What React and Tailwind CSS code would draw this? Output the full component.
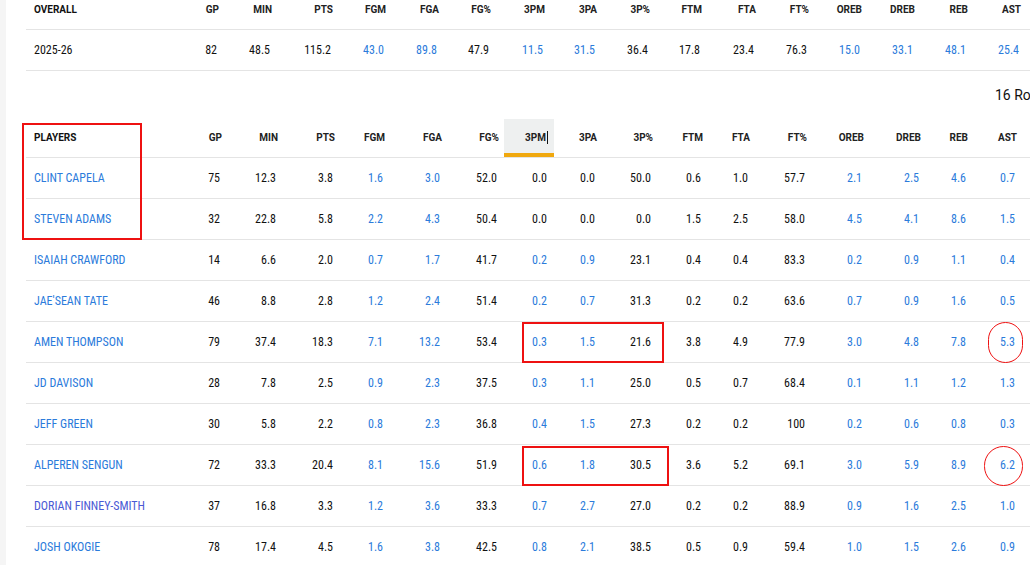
const overallCols = ["GP", "MIN", "PTS", "FGM", "FGA", "FG%", "3PM", "3PA", "3P%", "FTM", "FTA", "FT%", "OREB", "DREB", "REB", "AST"];
const blueCols = [3, 4, 6, 7, 12, 13, 14, 15];

const overall = ["82", "48.5", "115.2", "43.0", "89.8", "47.9", "11.5", "31.5", "36.4", "17.8", "23.4", "76.3", "15.0", "33.1", "48.1", "25.4"];

const players = [
  ["CLINT CAPELA", "75", "12.3", "3.8", "1.6", "3.0", "52.0", "0.0", "0.0", "50.0", "0.6", "1.0", "57.7", "2.1", "2.5", "4.6", "0.7"],
  ["STEVEN ADAMS", "32", "22.8", "5.8", "2.2", "4.3", "50.4", "0.0", "0.0", "0.0", "1.5", "2.5", "58.0", "4.5", "4.1", "8.6", "1.5"],
  ["ISAIAH CRAWFORD", "14", "6.6", "2.0", "0.7", "1.7", "41.7", "0.2", "0.9", "23.1", "0.4", "0.4", "83.3", "0.2", "0.9", "1.1", "0.4"],
  ["JAE'SEAN TATE", "46", "8.8", "2.8", "1.2", "2.4", "51.4", "0.2", "0.7", "31.3", "0.2", "0.2", "63.6", "0.7", "0.9", "1.6", "0.5"],
  ["AMEN THOMPSON", "79", "37.4", "18.3", "7.1", "13.2", "53.4", "0.3", "1.5", "21.6", "3.8", "4.9", "77.9", "3.0", "4.8", "7.8", "5.3"],
  ["JD DAVISON", "28", "7.8", "2.5", "0.9", "2.3", "37.5", "0.3", "1.1", "25.0", "0.5", "0.7", "68.4", "0.1", "1.1", "1.2", "1.3"],
  ["JEFF GREEN", "30", "5.8", "2.2", "0.8", "2.3", "36.8", "0.4", "1.5", "27.3", "0.2", "0.2", "100", "0.2", "0.6", "0.8", "0.3"],
  ["ALPEREN SENGUN", "72", "33.3", "20.4", "8.1", "15.6", "51.9", "0.6", "1.8", "30.5", "3.6", "5.2", "69.1", "3.0", "5.9", "8.9", "6.2"],
  ["DORIAN FINNEY-SMITH", "37", "16.8", "3.3", "1.2", "3.6", "33.3", "0.7", "2.7", "27.0", "0.2", "0.2", "88.9", "0.9", "1.6", "2.5", "1.0"],
  ["JOSH OKOGIE", "78", "17.4", "4.5", "1.6", "3.8", "42.5", "0.8", "2.1", "38.5", "0.5", "0.9", "59.4", "1.0", "1.5", "2.6", "0.9"],
];

const topGrid = "grid grid-cols-[154px_44px_53px_61px_53px_53px_52px_54px_52px_53px_52px_54px_53px_53px_53px_53px_53px_1fr]";
const playerGrid = "grid grid-cols-[157px_44px_56px_57px_50px_57px_57px_50px_48px_56px_50px_47px_57px_57px_57px_47px_49px_1fr]";

// zero values are plain text, the rest of the linked columns are blue
function Num({ value, blue }) {
  const link = blue && value !== "0.0";
  return (
    <div className={`flex items-center justify-end pr-[7px] text-[12px] font-stretch-semi-condensed ${link ? "text-[#2b7bdb]" : "text-[#111]"}`}>
      {value}
    </div>
  );
}

function Head({ label, active }) {
  if (active) {
    return (
      <div className="flex items-center justify-end pr-[6px] bg-[#eef0f0] border-b-4 border-[#f0a80e] pt-[2px]">
        <span className="text-[10px] font-bold text-[#222]">{label}</span>
        <span className="w-px h-[13px] bg-[#111] ml-px" />
      </div>
    );
  }
  return <div className="flex items-center justify-end pr-[5px] pb-px text-[10px] font-bold text-[#222]">{label}</div>;
}

export default function App() {
  return (
    <div className="relative w-[1030px] h-[565px] overflow-hidden flex bg-white font-['Roboto',sans-serif]">
      <div className="w-[6px] shrink-0 bg-[#f5f5f5]" />
      <div className="flex-1 min-w-0 pl-[20px]">
        <div className="w-[1100px]">
          {/* overall */}
          <div className={`${topGrid} h-[39px] -mt-[9px] border-b border-[#e4e4e4]`}>
            <div className="flex items-center pl-[8px] pb-px text-[10px] font-bold text-[#111]">OVERALL</div>
            {overallCols.map((c) => (
              <Head key={c} label={c} />
            ))}
            <div />
          </div>
          <div className={`${topGrid} h-[41px] border-b border-[#e4e4e4]`}>
            <div className="flex items-center pl-[8px] text-[12px] font-stretch-semi-condensed text-[#111]">2025-26</div>
            {overall.map((v, i) => (
              <Num key={i} value={v} blue={blueCols.includes(i)} />
            ))}
            <div />
          </div>

          <div className="h-[48px] flex items-center pl-[969px] text-[14px] text-[#111] whitespace-nowrap">16 Rows</div>

          {/* players */}
          <div className={`${playerGrid} h-[39px] border-b border-[#e4e4e4]`}>
            <div className="flex items-center pl-[8px] pb-px text-[10px] font-bold text-[#111]">PLAYERS</div>
            {overallCols.map((c) => (
              <Head key={c} label={c} active={c === "3PM"} />
            ))}
            <div />
          </div>
          {players.map((row) => (
            <div key={row[0]} className={`${playerGrid} h-[41px] border-b border-[#e4e4e4]`}>
              <div
                className={`flex items-center pl-[8px] text-[12px] font-stretch-semi-condensed whitespace-nowrap ${
                  row[0] === "DORIAN FINNEY-SMITH" ? "text-[#4a5ad4]" : "text-[#2b7bdb]"
                }`}
              >
                {row[0]}
              </div>
              {row.slice(1).map((v, i) => (
                <Num key={i} value={v} blue={blueCols.includes(i)} />
              ))}
              <div />
            </div>
          ))}
        </div>
      </div>

      {/* annotations */}
      <div className="absolute left-[22px] top-[123px] w-[120px] h-[117px] border-2 border-[#ee1111]" />
      <div className="absolute left-[522px] top-[322px] w-[142px] h-[41px] border-2 border-[#ee1111]" />
      <div className="absolute left-[522px] top-[446px] w-[147px] h-[40px] border-2 border-[#ee1111]" />
      <div className="absolute left-[988px] top-[322px] w-[35px] h-[41px] rounded-full border-[1.5px] border-[#ee1111]" />
      <div className="absolute left-[984px] top-[446px] w-[39px] h-[40px] rounded-full border-[1.5px] border-[#ee1111]" />
    </div>
  );
}
